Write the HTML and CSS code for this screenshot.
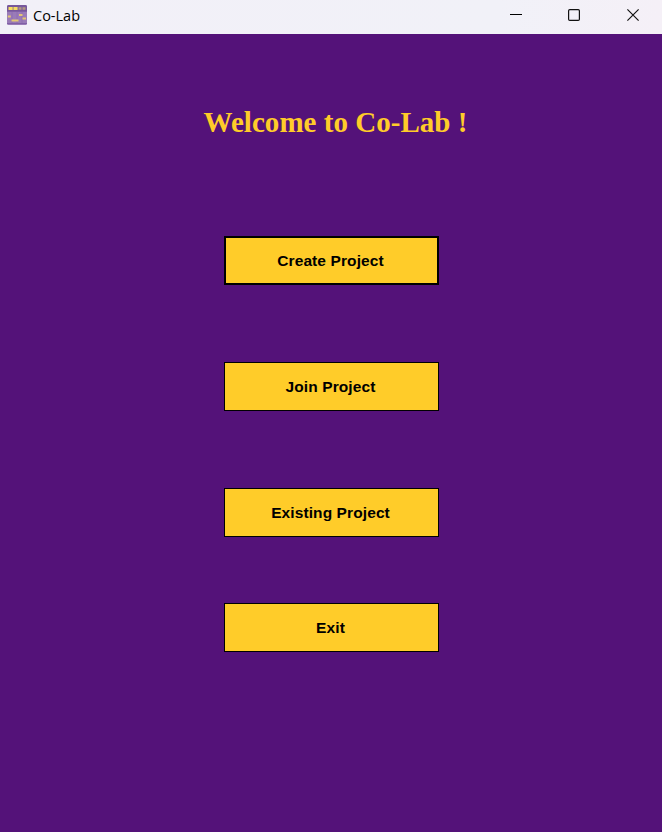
FILE: index.html
```html
<!DOCTYPE html>
<html lang="en">
<head>
<meta charset="utf-8">
<title>Co-Lab</title>
<link rel="stylesheet" href="styles.css">
</head>
<body>
<header class="titlebar">
  <svg class="app-icon" width="20" height="20" viewBox="0 0 20 20" aria-hidden="true">
    <rect width="20" height="20" rx="1.500" fill="#9a7bb8"/>
    <path d="M0 1.500A1.500 1.500 0 0 1 1.500 0h17A1.500 1.500 0 0 1 20 1.500V6H0z" fill="#77579c"/>
    <path d="M0 6.500h20M0 18.500h20" stroke="#8060a6"/>
    <path d="M5 7v11M10 7v11M15 7v11" stroke="#8d6cb0" stroke-width=".8"/>
    <path d="M1.500 3.500h4.200M6.400 3.500h4.200" stroke="#f5dc62" stroke-width="3"/>
    <path d="M11.500 3.500h3M15.500 3.500h3" stroke="#b59a80" stroke-width="2.600"/>
    <path d="M.8 11.500h3M4.500 15.500h7M12 10h3.500M15.500 13.500h3.500" stroke="#e3c774" stroke-width="2"/>
  </svg>
  <span class="app-name">Co-Lab</span>
  <div class="controls">
    <svg width="12" height="12" viewBox="0 0 12 12"><path d="M0 5.500h12" stroke="#000"/></svg>
    <svg width="12" height="12" viewBox="0 0 12 12"><rect x=".6" y=".6" width="10.800" height="10.800" rx="1.200" fill="none" stroke="#111" stroke-width="1.200"/></svg>
    <svg width="12" height="12" viewBox="0 0 12 12"><path d="M.4.4l11.200 11.200M11.600.4L.4 11.600" stroke="#111" stroke-width="1.150"/></svg>
  </div>
</header>
<main class="content">
  <h1 class="welcome">Welcome to Co-Lab !</h1>
  <button class="action focused">Create Project</button>
  <button class="action">Join Project</button>
  <button class="action existing">Existing Project</button>
  <button class="action exit">Exit</button>
</main>
</body>
</html>
```
FILE: styles.css
```css
body {
  margin: 0;
  height: 832px;
  overflow: hidden;
  background: #541279;
}
.titlebar {
  display: flex;
  align-items: center;
  box-sizing: border-box;
  height: 34px;
  padding: 0 23px 4px 7px;
  background: linear-gradient(90deg, #f2f0f8, #f1f1f8 75%, #f5f0f7);
}
.app-name {
  margin: 2px 0 0 6px;
  font: 14.500px/20px "Open Sans", "Noto Sans", sans-serif;
  color: #000;
}
.controls {
  display: flex;
  gap: 47px;
  margin-left: auto;
}
.controls svg:first-child {
  margin-right: -1px;
}
.content {
  display: flex;
  flex-direction: column;
  align-items: center;
}
.welcome {
  margin: 71px 0 97px 9px;
  font: bold 29px/34px "Palatino Linotype", "Book Antiqua", "Liberation Serif", serif;
  letter-spacing: 0.03px;
  white-space: nowrap;
  color: #ffcc29;
}
.action {
  box-sizing: border-box;
  width: 215px;
  height: 49px;
  margin: 0 0 77px 1px;
  padding: 0 2px 0 0;
  border: 1px solid #000;
  border-radius: 0;
  background: #ffcc29;
  color: #000;
  font: bold 15.500px/20px "Liberation Sans", sans-serif;
  letter-spacing: 0.1px;
}
.focused {
  border-width: 2px;
}
.existing {
  margin-bottom: 66px;
}
.exit {
  margin-bottom: 0;
}
```
